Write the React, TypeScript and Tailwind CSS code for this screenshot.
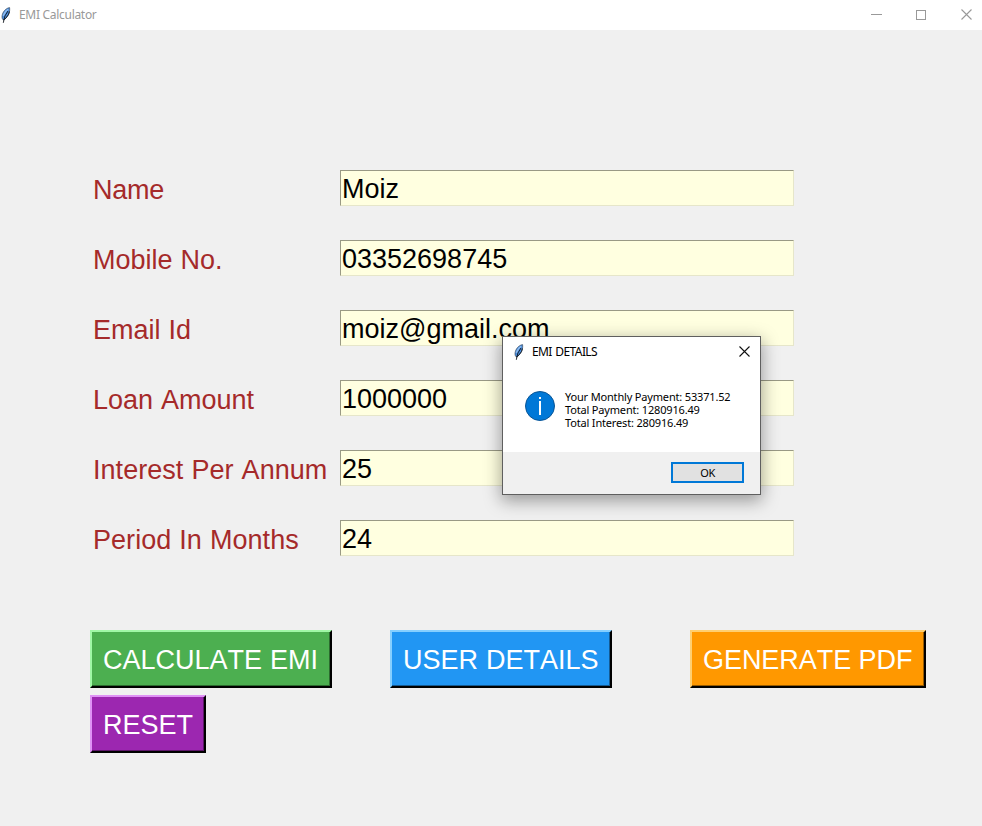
const ARIAL = "font-['Liberation_Sans',Arial,sans-serif] text-[27px] leading-[31px] whitespace-nowrap [font-kerning:none]";
const UI = "font-['Noto_Sans','Segoe_UI',sans-serif] whitespace-nowrap";

const fields = [
  { label: "Name", value: "Moiz", tracking: "tracking-[-0.25px]" },
  { label: "Mobile No.", value: "03352698745", tracking: "" },
  { label: "Email Id", value: "moiz@gmail.com", tracking: "" },
  { label: "Loan Amount", value: "1000000", tracking: "" },
  { label: "Interest Per Annum", value: "25", tracking: "tracking-[0.04px]" },
  { label: "Period In Months", value: "24", tracking: "tracking-[0.04px]" },
];

function Feather() {
  return (
    <svg width="11" height="16" viewBox="0 0 11 16" className="shrink-0">
      <path d="M9.600.6C7.200.9 4.300 3 3 5.800 2.100 7.800 1.700 9.800 2.200 11.400L3.300 13C5.400 12.200 7.800 9.500 8.900 6.500 9.600 4.400 9.900 2.400 9.600.6Z" fill="#4a8ddc" stroke="#303a48" strokeWidth=".6" />
      <path d="M8.200 2.200C6 3.500 4.300 5.800 3.300 9" stroke="#8fbcf0" strokeWidth="1.300" fill="none" />
      <path d="M8 4 4.900 9 3.300 15.800" stroke="#10151c" strokeWidth=".9" fill="none" />
      <path d="M9.500 4.500 8.500 7.600 5.400 11.700 3.300 13" stroke="#10151c" strokeWidth=".9" fill="none" />
    </svg>
  );
}

function Cross({ color }: { color: string }) {
  return (
    <svg width="11" height="11" viewBox="0 0 11 11" className="block shrink-0">
      <path d="M.5.5 10.500 10.500M10.500.5.5 10.500" stroke={color} strokeWidth="1.100" />
    </svg>
  );
}

type ButtonProps = { text: string; size: string; outer: string; inner: string };

function RaisedButton({ text, size, outer, inner }: ButtonProps) {
  return (
    <button className={`flex border-t-2 border-l-2 border-r-2 border-b-2 border-r-black border-b-black ${size} ${outer}`}>
      <span className={`flex h-full w-full items-start border-r border-b pt-[13px] pl-[11px] text-white ${ARIAL} ${inner}`}>{text}</span>
    </button>
  );
}

function Dialog() {
  return (
    <div className={`absolute left-[502px] top-[336px] flex h-[159px] w-[259px] flex-col border border-[#5f5f5f] bg-white text-black shadow-[0_5px_16px_1px_rgba(0,0,0,0.36)] ${UI}`}>
      <div className="flex h-[29px] items-center pr-[10px] pl-[10px]">
        <Feather />
        <span className="ml-2 text-[12px] leading-4 tracking-[-0.6px] [word-spacing:1px]">EMI DETAILS</span>
        <span className="ml-auto pb-px"><Cross color="#111111" /></span>
      </div>
      <div className="flex flex-1 pt-[25px] pl-[22px]">
        <svg width="30" height="30" viewBox="0 0 30 30" className="shrink-0">
          <circle cx="15" cy="15" r="14.500" fill="#0078d7" stroke="#0a5596" />
          <path d="M14 6h2v2h-2zM14 10h2v14h-2z" fill="white" />
        </svg>
        <div className="-mt-px ml-[10px] text-[11px] leading-[13px] tracking-[-0.17px]">
          <p className="h-[13px]">Your Monthly Payment: 53371.52</p>
          <p className="h-[13px]">Total Payment: 1280916.49</p>
          <p className="h-[13px]">Total Interest: 280916.49</p>
        </div>
      </div>
      <div className="flex h-[42px] justify-end bg-[#f0f0f0] pt-[10px] pr-4">
        <button className="flex h-[21px] w-[73px] items-center justify-center border-2 border-[#0078d7] bg-[#e1e1e1] pt-px text-[11px] leading-4 tracking-[-0.4px]">OK</button>
      </div>
    </div>
  );
}

export default function App() {
  return (
    <div className="relative h-[826px] w-[982px] overflow-hidden bg-[#f0f0f0]">
      <header className={`flex h-[30px] items-center bg-white pr-[10px] ${UI}`}>
        <Feather />
        <span className="ml-2 text-[12px] leading-4 tracking-[-0.3px] text-[#999999]">EMI Calculator</span>
        <div className="ml-auto flex items-center pb-px">
          <span className="mr-[34px] h-px w-[11px] bg-[#999999]" />
          <span className="mr-[35px] h-[10px] w-[10px] border border-[#999999]" />
          <Cross color="#999999" />
        </div>
      </header>
      <main className="pt-[140px] pl-[90px]">
        <div className="flex flex-col gap-[34px]">
          {fields.map((f) => (
            <div key={f.label} className="flex h-9 items-start">
              <label className={`w-[250px] pt-[5px] pl-[3px] text-[#a52a2a] [word-spacing:0.5px] ${f.tracking} ${ARIAL}`}>{f.label}</label>
              <div className={`h-9 w-[454px] border border-t-[#999985] border-r-[#e6e6ca] border-b-[#e6e6ca] border-l-[#999985] bg-[#ffffe0] pt-[3px] pl-px text-black ${ARIAL}`}>{f.value}</div>
            </div>
          ))}
        </div>
        <div className="mt-[74px] grid grid-cols-[300px_300px_236px] gap-y-[7px]">
          <RaisedButton text="CALCULATE EMI" size="h-[58px] w-[242px]" outer="bg-[#4caf50] border-t-[#a0f8a6] border-l-[#a0f8a6]" inner="border-[#2b6a2e] [word-spacing:0.5px]" />
          <RaisedButton text="USER DETAILS" size="h-[58px] w-[222px]" outer="bg-[#2196f3] border-t-[#85cfff] border-l-[#85cfff]" inner="border-[#145a92] [word-spacing:0.5px]" />
          <RaisedButton text="GENERATE PDF" size="h-[58px] w-[236px]" outer="bg-[#ff9800] border-t-[#ffcf70] border-l-[#ffcf70]" inner="border-[#995b00] tracking-[-0.05px]" />
          <RaisedButton text="RESET" size="h-[58px] w-[116px]" outer="bg-[#9c27b0] border-t-[#df92f5] border-l-[#df92f5]" inner="border-[#5e176a]" />
        </div>
      </main>
      <Dialog />
    </div>
  );
}
